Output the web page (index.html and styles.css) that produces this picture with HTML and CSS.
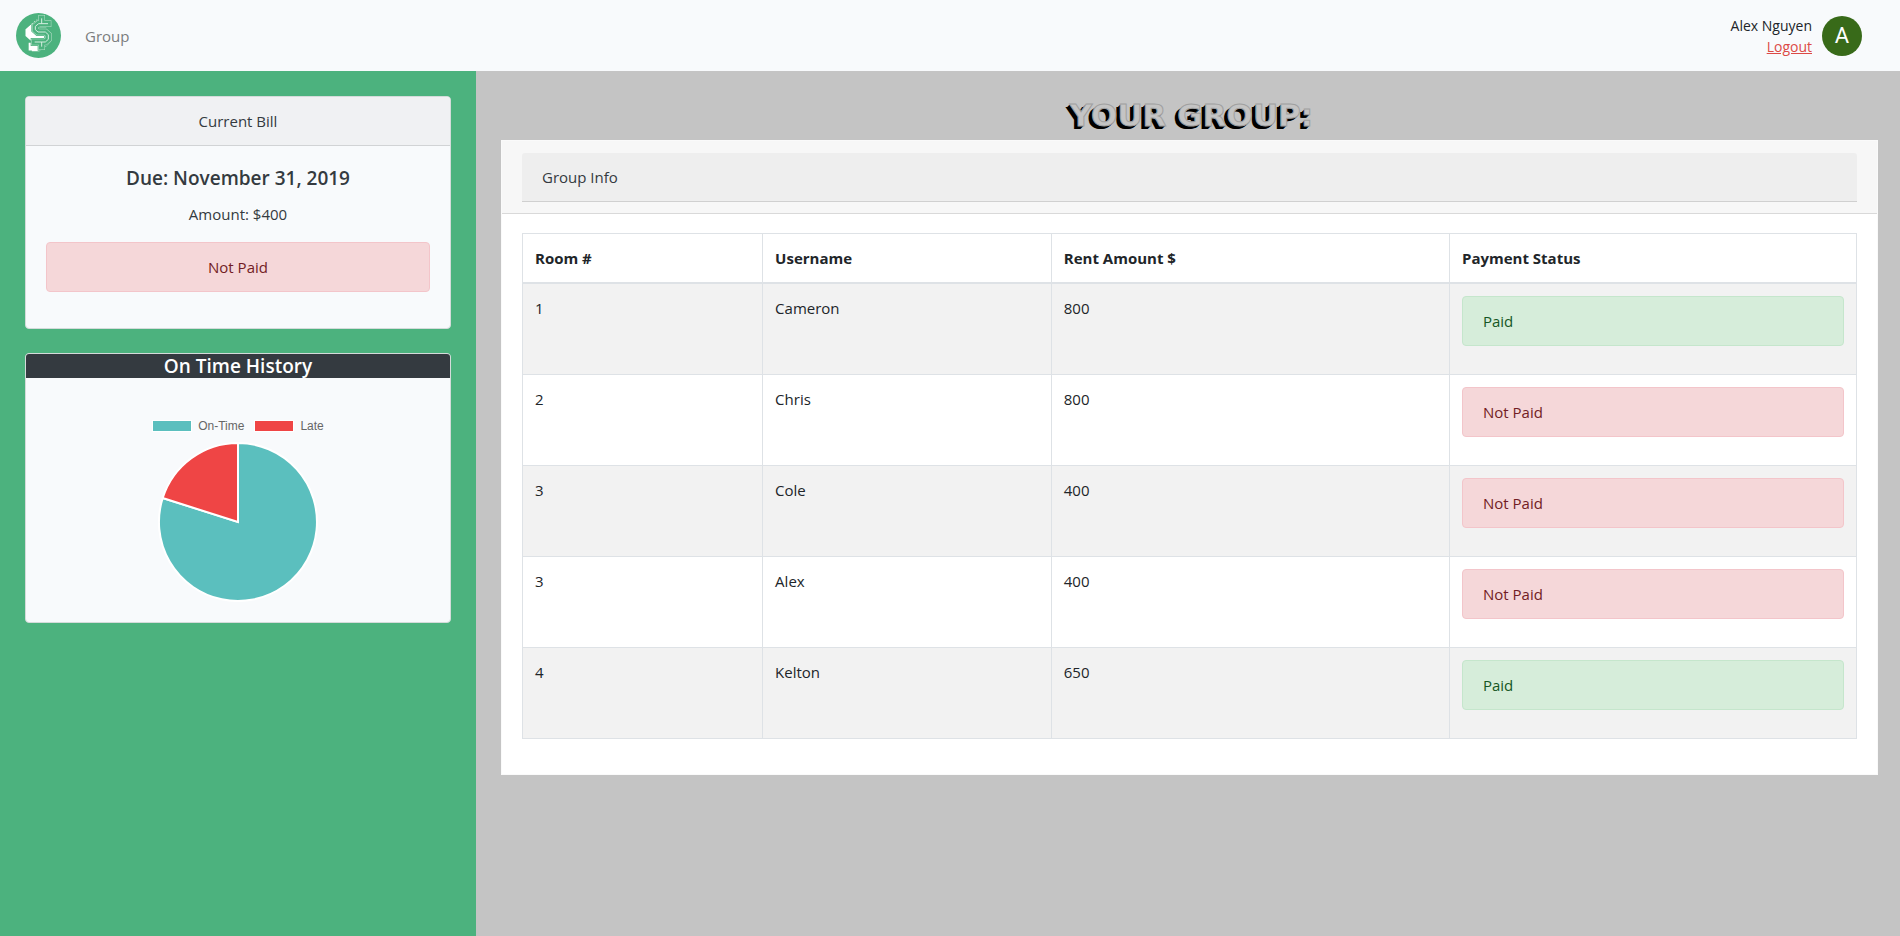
FILE: index.html
```html
<!DOCTYPE html>
<html lang="en">
<head>
<meta charset="utf-8">
<meta name="viewport" content="width=device-width, initial-scale=1">
<title>Group</title>
<link rel="stylesheet" href="styles.css">
</head>
<body>
<header class="navbar">
  <nav class="nav-links">
    <a class="brand" href="#" aria-label="Home">
      <svg class="logo" viewBox="0 0 135 135" aria-hidden="true">
        <defs>
          <path id="dollar" d="M96 32H68L58 40V50L66 57H88L97 65V79L88 87H56M77 16V32M77 87V101"/>
        </defs>
        <circle cx="67.500" cy="67.500" r="67.500" fill="#4cb27e"/>
        <g fill="none" stroke="#fff" stroke-width="23">
          <use href="#dollar" x="-5" y="4"/>
          <use href="#dollar" x="-11" y="9"/>
          <use href="#dollar" x="-18" y="14"/>
        </g>
        <g fill="none">
          <use href="#dollar" stroke="#4cb27e" stroke-width="24" stroke-linecap="square"/>
          <use href="#dollar" stroke="#b9e0cb" stroke-width="20" stroke-linecap="square"/>
          <use href="#dollar" stroke="#4cb27e" stroke-width="17" stroke-linecap="square"/>
          <use href="#dollar" stroke="#d5eee0" stroke-width="3"/>
        </g>
      </svg>
    </a>
    <a class="nav-link" href="#">Group</a>
  </nav>
  <div class="account">
    <div class="account-text">
      <span>Alex Nguyen</span>
      <a class="logout" href="#">Logout</a>
    </div>
    <span class="avatar">A</span>
  </div>
</header>
<div class="layout">
  <aside class="sidebar">
    <section class="card bill">
      <div class="card-header">Current Bill</div>
      <div class="card-body">
        <h5 class="card-title">Due: November 31, 2019</h5>
        <p class="amount">Amount: $400</p>
        <div class="alert unpaid">Not Paid</div>
      </div>
    </section>
    <section class="card history">
      <h5 class="history-title">On Time History</h5>
      <div class="legend">
        <span class="key"><i class="swatch on-time"></i>On-Time</span>
        <span class="key"><i class="swatch late"></i>Late</span>
      </div>
      <svg class="pie" viewBox="-80 -80 160 160" role="img" aria-label="On-Time 80%, Late 20%">
        <g stroke="#fff" stroke-width="2">
          <path fill="#5bbfbe" d="M0 0V-79A79 79 0 1 1 -75.300 -24Z"/>
          <path fill="#ef4545" d="M0 0L-75.300 -24A79 79 0 0 1 0 -79Z"/>
        </g>
      </svg>
    </section>
  </aside>
  <main class="main">
    <h1 class="page-title">YOUR GROUP:</h1>
    <section class="group-card">
      <div class="group-header"><div class="group-info">Group Info</div></div>
      <div class="group-body">
        <table class="table">
          <colgroup><col class="col-room"><col class="col-user"><col class="col-rent"><col class="col-status"></colgroup>
          <thead><tr><th>Room #</th><th>Username</th><th>Rent Amount $</th><th>Payment Status</th></tr></thead>
          <tbody>
            <tr><td>1</td><td>Cameron</td><td>800</td><td><div class="alert paid">Paid</div></td></tr>
            <tr><td>2</td><td>Chris</td><td>800</td><td><div class="alert unpaid">Not Paid</div></td></tr>
            <tr><td>3</td><td>Cole</td><td>400</td><td><div class="alert unpaid">Not Paid</div></td></tr>
            <tr><td>3</td><td>Alex</td><td>400</td><td><div class="alert unpaid">Not Paid</div></td></tr>
            <tr><td>4</td><td>Kelton</td><td>650</td><td><div class="alert paid">Paid</div></td></tr>
          </tbody>
        </table>
      </div>
    </section>
  </main>
</div>
</body>
</html>
```
FILE: styles.css
```css
* { box-sizing: border-box; }
body {
  margin: 0;
  min-height: 100vh;
  display: flex;
  flex-direction: column;
  font-family: "Open Sans", "Noto Sans", sans-serif;
  font-size: 15px;
  line-height: 24px;
  color: #212529;
  background: #c4c4c4;
}
h1, h5, p { margin: 0; }
.navbar {
  display: flex;
  justify-content: space-between;
  align-items: center;
  height: 71px;
  padding: 0 38px 0 16px;
  background: #f8fafc;
}
.nav-links { display: flex; align-items: center; gap: 24px; }
.brand, .logo { display: block; width: 45px; height: 45px; }
.nav-link { color: #7b7d7e; text-decoration: none; }
.account { display: flex; align-items: center; gap: 10px; }
.account-text {
  display: flex;
  flex-direction: column;
  align-items: flex-end;
  font-size: 14px;
  line-height: 21px;
}
.logout { color: #dc4a46; }
.avatar {
  width: 40px;
  height: 40px;
  border-radius: 50%;
  background: #386a19;
  color: #fff;
  font-family: Roboto, sans-serif;
  font-size: 22px;
  line-height: 40px;
  text-align: center;
}
.layout {
  flex: 1;
  display: grid;
  grid-template-columns: calc(25% + 1px) 1fr;
}
.sidebar {
  display: flex;
  flex-direction: column;
  gap: 24px;
  padding: 25px;
  background: #4cb27e;
}
.card {
  border: 1px solid #d4dbda;
  border-radius: 4px;
  background: #f8fafc;
  color: #343a40;
  text-align: center;
  overflow: hidden;
}
.card-header {
  padding: 12px 20px;
  border-bottom: 1px solid #d1d3d5;
  background: #f0f1f3;
}
.card-body { padding: 20px; }
.card-title {
  margin-bottom: 12px;
  font-size: 19px;
  line-height: 24px;
  font-weight: 600;
}
.amount { margin-bottom: 16px; }
.alert {
  margin-bottom: 16px;
  padding: 12px 20px;
  border: 1px solid;
  border-radius: 4px;
}
.unpaid { color: #721c24; background: #f5d7d9; border-color: #f3c5ca; }
.paid { color: #155724; background: #d6edda; border-color: #c5e6cc; }
.history { padding-bottom: 20px; }
.history-title {
  background: #343a40;
  color: #fff;
  font-size: 19px;
  line-height: 24px;
  font-weight: 600;
}
.legend {
  display: flex;
  justify-content: center;
  gap: 10px;
  margin-top: 40px;
  font: 12px/16px "Liberation Sans", Arial, sans-serif;
  color: #666;
}
.key { display: flex; align-items: center; gap: 6px; }
.swatch { width: 40px; height: 12px; border: 1px solid #fff; }
.on-time { background: #5bbfbe; }
.late { background: #ef4545; }
.pie { display: block; width: 160px; height: 160px; margin: 8px auto 0; }
.main { padding: 24px 22px 25px 25px; }
.page-title {
  padding: 0 0 5px 4px;
  font-family: "DejaVu Sans", sans-serif;
  font-size: 31px;
  line-height: 40px;
  font-weight: 700;
  text-align: center;
  color: #c4c4c4;
  -webkit-text-stroke: 1px #a0a0a0;
  text-shadow: -1px 1px #000, -2px 2px #000, -3px 3px #000, -4px 3px #000;
}
.group-card { background: #fff; border: 1px solid #fafafa; }
.group-header {
  padding: 12px 20px 11px;
  border-bottom: 1px solid #d9d9d9;
  background: #f7f7f7;
}
.group-info {
  padding: 12px 20px;
  border-bottom: 1px solid #d0d0d0;
  border-radius: 3px 3px 0 0;
  background: #eee;
  color: #343a40;
}
.group-body { padding: 19px 20px 35px; }
.table {
  width: 100%;
  table-layout: fixed;
  border-collapse: collapse;
}
.col-room { width: 18%; }
.col-user { width: 21.640%; }
.col-rent { width: 29.850%; }
.table th, .table td {
  padding: 12px;
  border: 1px solid #dee2e6;
  text-align: left;
  vertical-align: top;
}
.table th { border-bottom-width: 2px; font-weight: 700; }
.table tbody tr:nth-child(odd) { background: #f2f2f2; }
```
